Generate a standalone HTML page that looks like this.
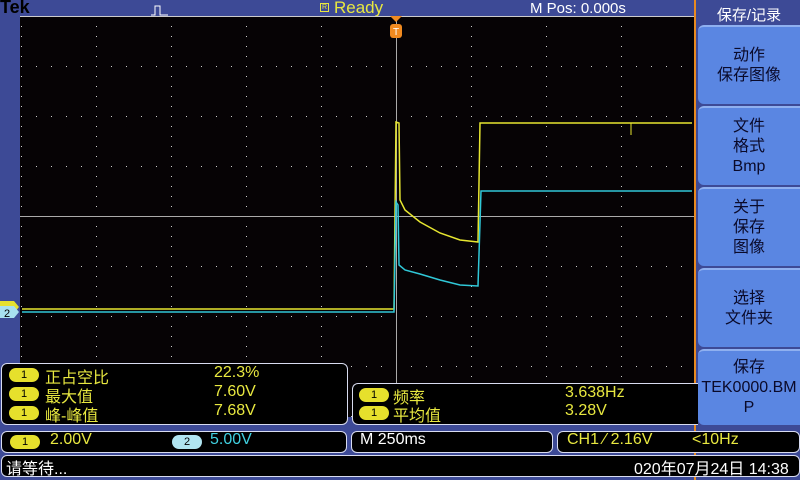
<!DOCTYPE html>
<html><head><meta charset="utf-8"><style>
*{margin:0;padding:0;box-sizing:border-box}
body{width:800px;height:480px;background:#3d4a96;position:relative;overflow:hidden;font-family:"Liberation Sans","Noto Sans CJK SC",sans-serif}
.a{position:absolute}
.scr{left:20px;top:16px;width:674px;height:401px;background:#060305}
.box{position:absolute;background:#000;border:1.5px solid #d8dcf0;border-radius:6px}
.y{color:#e8e840}
.pill{position:absolute;width:30px;height:14px;border-radius:7px;background:#e6e02c;color:#000;font-size:11px;text-align:center;line-height:14px}
.t{position:absolute;font-size:16px;white-space:nowrap}
.btn{position:absolute;left:698px;width:102px;background:#5a86e2;border-radius:6px 0 0 6px;color:#0a0a2a;font-size:16px;text-align:center;line-height:20px;display:flex;align-items:center;justify-content:center;border-top:2px solid #8fb0f0}
</style></head><body>
<div class="a" style="left:0;top:-3px;font-size:18px;font-weight:bold;color:#000">Tek</div>
<svg class="a" style="left:150px;top:4px" width="20" height="12"><path d="M1 11H5V2H10V11H18" stroke="#fff" fill="none" stroke-width="1"/></svg>
<div class="a" style="left:320px;top:3px;width:9px;height:9px;border:1px solid #e8e840;font-size:7px;color:#e8e840;line-height:7px;text-align:center">R</div>
<div class="a y" style="left:334px;top:-2px;font-size:17px">Ready</div>
<div class="a" style="left:530px;top:0px;font-size:15px;color:#fff">M Pos: 0.000s</div>
<div class="a scr"></div>
<svg class="a" style="left:0;top:0" width="800" height="480">
<defs><pattern id="d" width="15" height="50" patternUnits="userSpaceOnUse" x="21" y="16"><rect width="1" height="1" fill="#ccc"/></pattern>
<pattern id="v" width="75" height="10" patternUnits="userSpaceOnUse" x="21" y="16"><rect width="1" height="1" fill="#ccc"/></pattern></defs>
<rect x="20" y="16" width="674" height="401" fill="url(#d)"/>
<rect x="20" y="16" width="674" height="401" fill="url(#v)"/>
<line x1="20" y1="216.5" x2="694" y2="216.5" stroke="#aaa"/>
<line x1="396.5" y1="16" x2="396.5" y2="417" stroke="#aaa"/>
<line x1="20" y1="16.5" x2="694" y2="16.5" stroke="#ccc"/>
<polyline fill="none" stroke="#e6e630" stroke-width="1.5" points="22,309 394,309 396,122 399,123 400,200 405,210 420,222 440,233 460,240 478,242 480,123 692,123"/>
<polyline fill="none" stroke="#30c8d8" stroke-width="1.5" points="22,312 394,312 396,202 398,205 399,265 405,270 420,274 440,280 460,285 478,286 481,191 692,191"/>
<line x1="631" y1="123" x2="631" y2="135" stroke="#e6e630"/>
<path d="M390 16h12l-6 6z" fill="#f08a20"/>
<rect x="390" y="24" width="12" height="14" rx="3" fill="#f08a20"/>
<text x="396" y="35" font-size="10" text-anchor="middle" fill="#fff" font-family="Liberation Sans">T</text>
<path d="M0 301h14l5 6-5 6H0z" fill="#e6e030"/>
<path d="M0 306h14l5 6-5 6H0z" fill="#a8e0f0"/>
<text x="4" y="317" font-size="11" fill="#000" font-family="Liberation Sans">2</text>
</svg>
<div class="a" style="left:694px;top:0;width:106px;height:480px;background:#3d4a96;border-left:2px solid #e88a20"></div>
<div class="a" style="left:698px;top:4px;width:102px;font-size:15px;color:#fff;text-align:center">保存/记录</div>
<div class="btn" style="top:25px;height:79px">动作<br>保存图像</div>
<div class="btn" style="top:106px;height:79px">文件<br>格式<br>Bmp</div>
<div class="btn" style="top:187px;height:79px">关于<br>保存<br>图像</div>
<div class="btn" style="top:268px;height:79px">选择<br>文件夹</div>
<div class="btn" style="top:349px;height:76px">保存<br>TEK0000.BM<br>P</div>
<div class="box" style="left:1px;top:363px;width:347px;height:62px"></div>
<div class="pill" style="left:9px;top:368px">1</div><div class="t y" style="left:45px;top:364px">正占空比</div><div class="t y" style="left:214px;top:364px">22.3%</div>
<div class="pill" style="left:9px;top:387px">1</div><div class="t y" style="left:45px;top:383px">最大值</div><div class="t y" style="left:214px;top:383px">7.60V</div>
<div class="pill" style="left:9px;top:406px">1</div><div class="t y" style="left:45px;top:402px">峰-峰值</div><div class="t y" style="left:214px;top:402px">7.68V</div>
<div class="box" style="left:352px;top:383px;width:346px;height:42px;border-right:none;border-radius:6px 0 0 6px"></div>
<div class="pill" style="left:359px;top:388px">1</div><div class="t y" style="left:393px;top:384px">频率</div><div class="t y" style="left:565px;top:384px">3.638Hz</div>
<div class="pill" style="left:359px;top:406px">1</div><div class="t y" style="left:393px;top:402px">平均值</div><div class="t y" style="left:565px;top:402px">3.28V</div>
<div class="box" style="left:1px;top:431px;width:346px;height:22px"></div>
<div class="pill" style="left:10px;top:435px">1</div><div class="t y" style="left:50px;top:431px">2.00V</div>
<div class="pill" style="left:172px;top:435px;background:#b0e4f0">2</div><div class="t" style="left:210px;top:431px;color:#40d0e0">5.00V</div>
<div class="box" style="left:351px;top:431px;width:202px;height:22px"></div>
<div class="t" style="left:360px;top:431px;color:#fff">M 250ms</div>
<div class="box" style="left:557px;top:431px;width:243px;height:22px"></div>
<div class="t y" style="left:567px;top:431px">CH1 ⁄ 2.16V</div><div class="t y" style="left:692px;top:431px">&lt;10Hz</div>
<div class="box" style="left:1px;top:455px;width:799px;height:22px"></div>
<div class="t" style="left:6px;top:455px;color:#fff">请等待...</div>
<div class="t" style="left:634px;top:455px;color:#fff">020年07月24日 14:38</div>
</body></html>
